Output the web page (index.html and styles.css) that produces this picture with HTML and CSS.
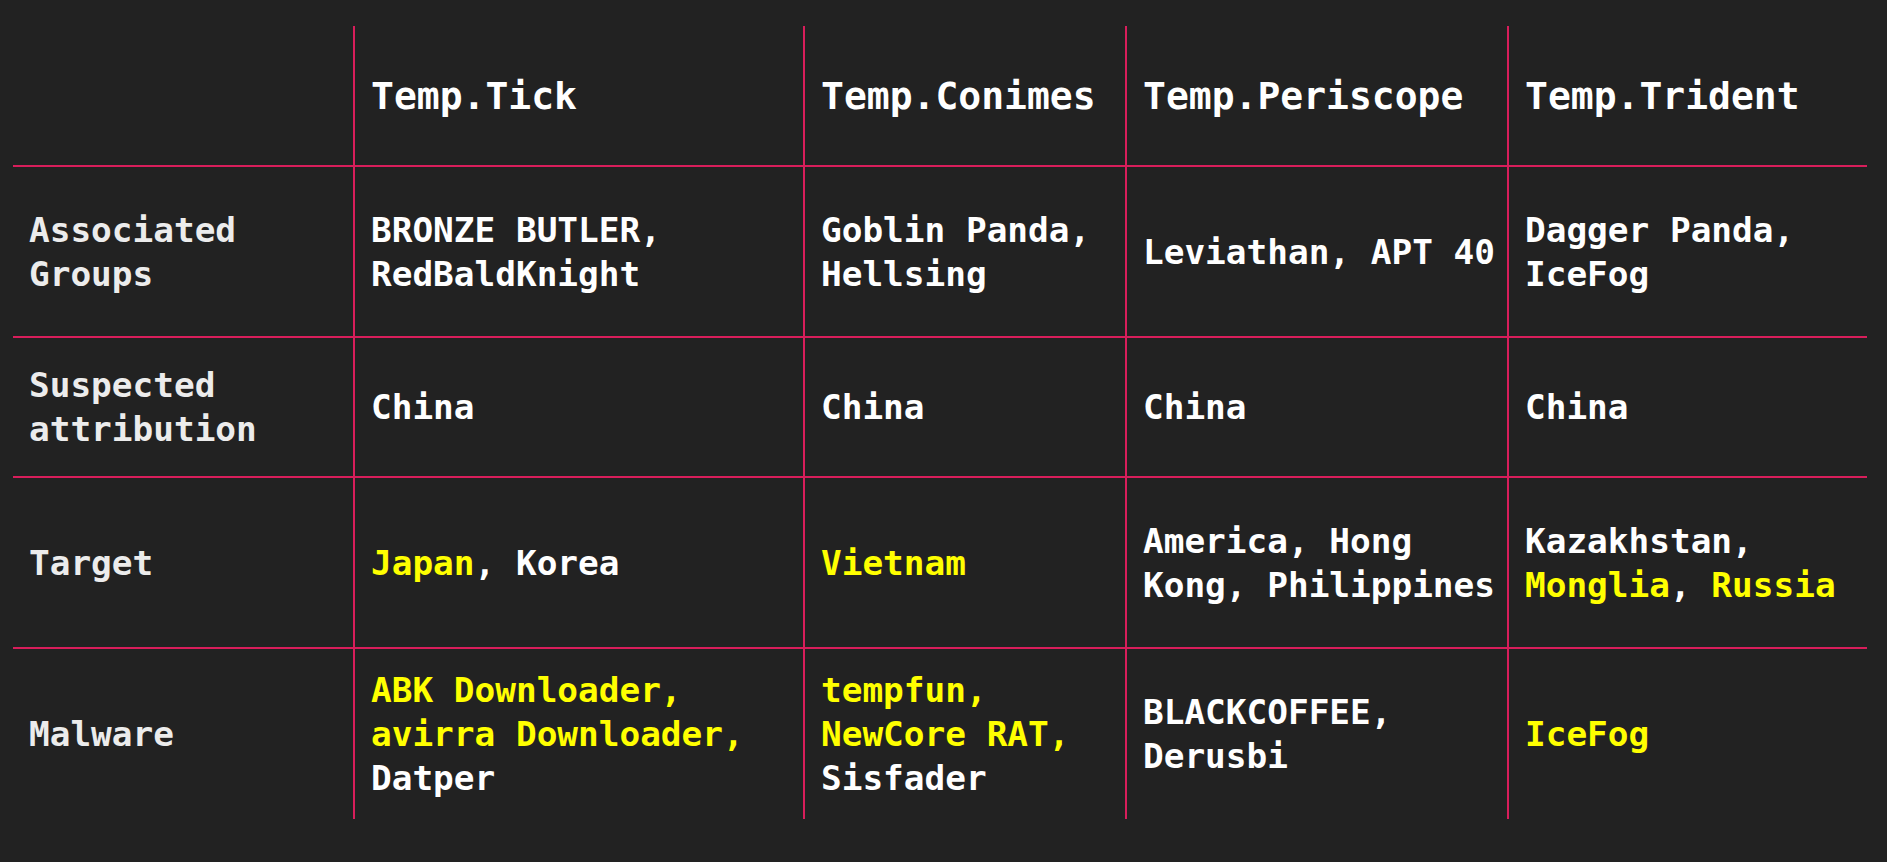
FILE: index.html
```html
<!DOCTYPE html>
<html lang="en">
<head>
<meta charset="utf-8">
<title>Temp groups comparison</title>
<link rel="stylesheet" href="styles.css">
</head>
<body>
<main class="page">
  <div class="matrix">
    <div class="cell corner"></div>
    <div class="cell head">Temp.Tick</div>
    <div class="cell head">Temp.Conimes</div>
    <div class="cell head">Temp.Periscope</div>
    <div class="cell head">Temp.Trident</div>

    <div class="cell label">Associated<br>Groups</div>
    <div class="cell">BRONZE BUTLER,<br>RedBaldKnight</div>
    <div class="cell">Goblin Panda,<br>Hellsing</div>
    <div class="cell">Leviathan, APT 40</div>
    <div class="cell">Dagger Panda,<br>IceFog</div>

    <div class="cell label">Suspected<br>attribution</div>
    <div class="cell">China</div>
    <div class="cell">China</div>
    <div class="cell">China</div>
    <div class="cell">China</div>

    <div class="cell label">Target</div>
    <div class="cell"><span class="hl">Japan</span>, Korea</div>
    <div class="cell"><span class="hl">Vietnam</span></div>
    <div class="cell">America, Hong<br>Kong, Philippines</div>
    <div class="cell">Kazakhstan,<br><span class="hl">Monglia</span>, <span class="hl">Russia</span></div>

    <div class="cell label">Malware</div>
    <div class="cell"><span class="hl">ABK Downloader,<br>avirra Downloader,</span><br>Datper</div>
    <div class="cell"><span class="hl">tempfun,<br>NewCore RAT,</span><br>Sisfader</div>
    <div class="cell">BLACKCOFFEE,<br>Derusbi</div>
    <div class="cell"><span class="hl">IceFog</span></div>
  </div>
</main>
</body>
</html>
```

FILE: styles.css
```css
html, body {
  margin: 0;
  padding: 0;
  background: #222222;
}

.page {
  padding: 26px 20px 43px 13px;
}

.matrix {
  display: grid;
  width: 1854px;
  grid-template-columns: 340px 448px 320px 380px 358px;
  grid-template-rows: 139px 169px 138px 169px 170px;
  gap: 2px;
  background: #d81e5b;
  font-family: "DejaVu Sans Mono", "Liberation Mono", monospace;
}

.cell {
  display: block;
  align-content: center;
  background: #222222;
  padding: 0 0 0 16px;
  color: #ffffff;
  font-size: 34.4px;
  font-weight: bold;
  line-height: 44px;
  white-space: nowrap;
}

.head {
  font-size: 38px;
}

.label {
  color: #ececec;
}

.hl {
  color: #ffff00;
}
```
